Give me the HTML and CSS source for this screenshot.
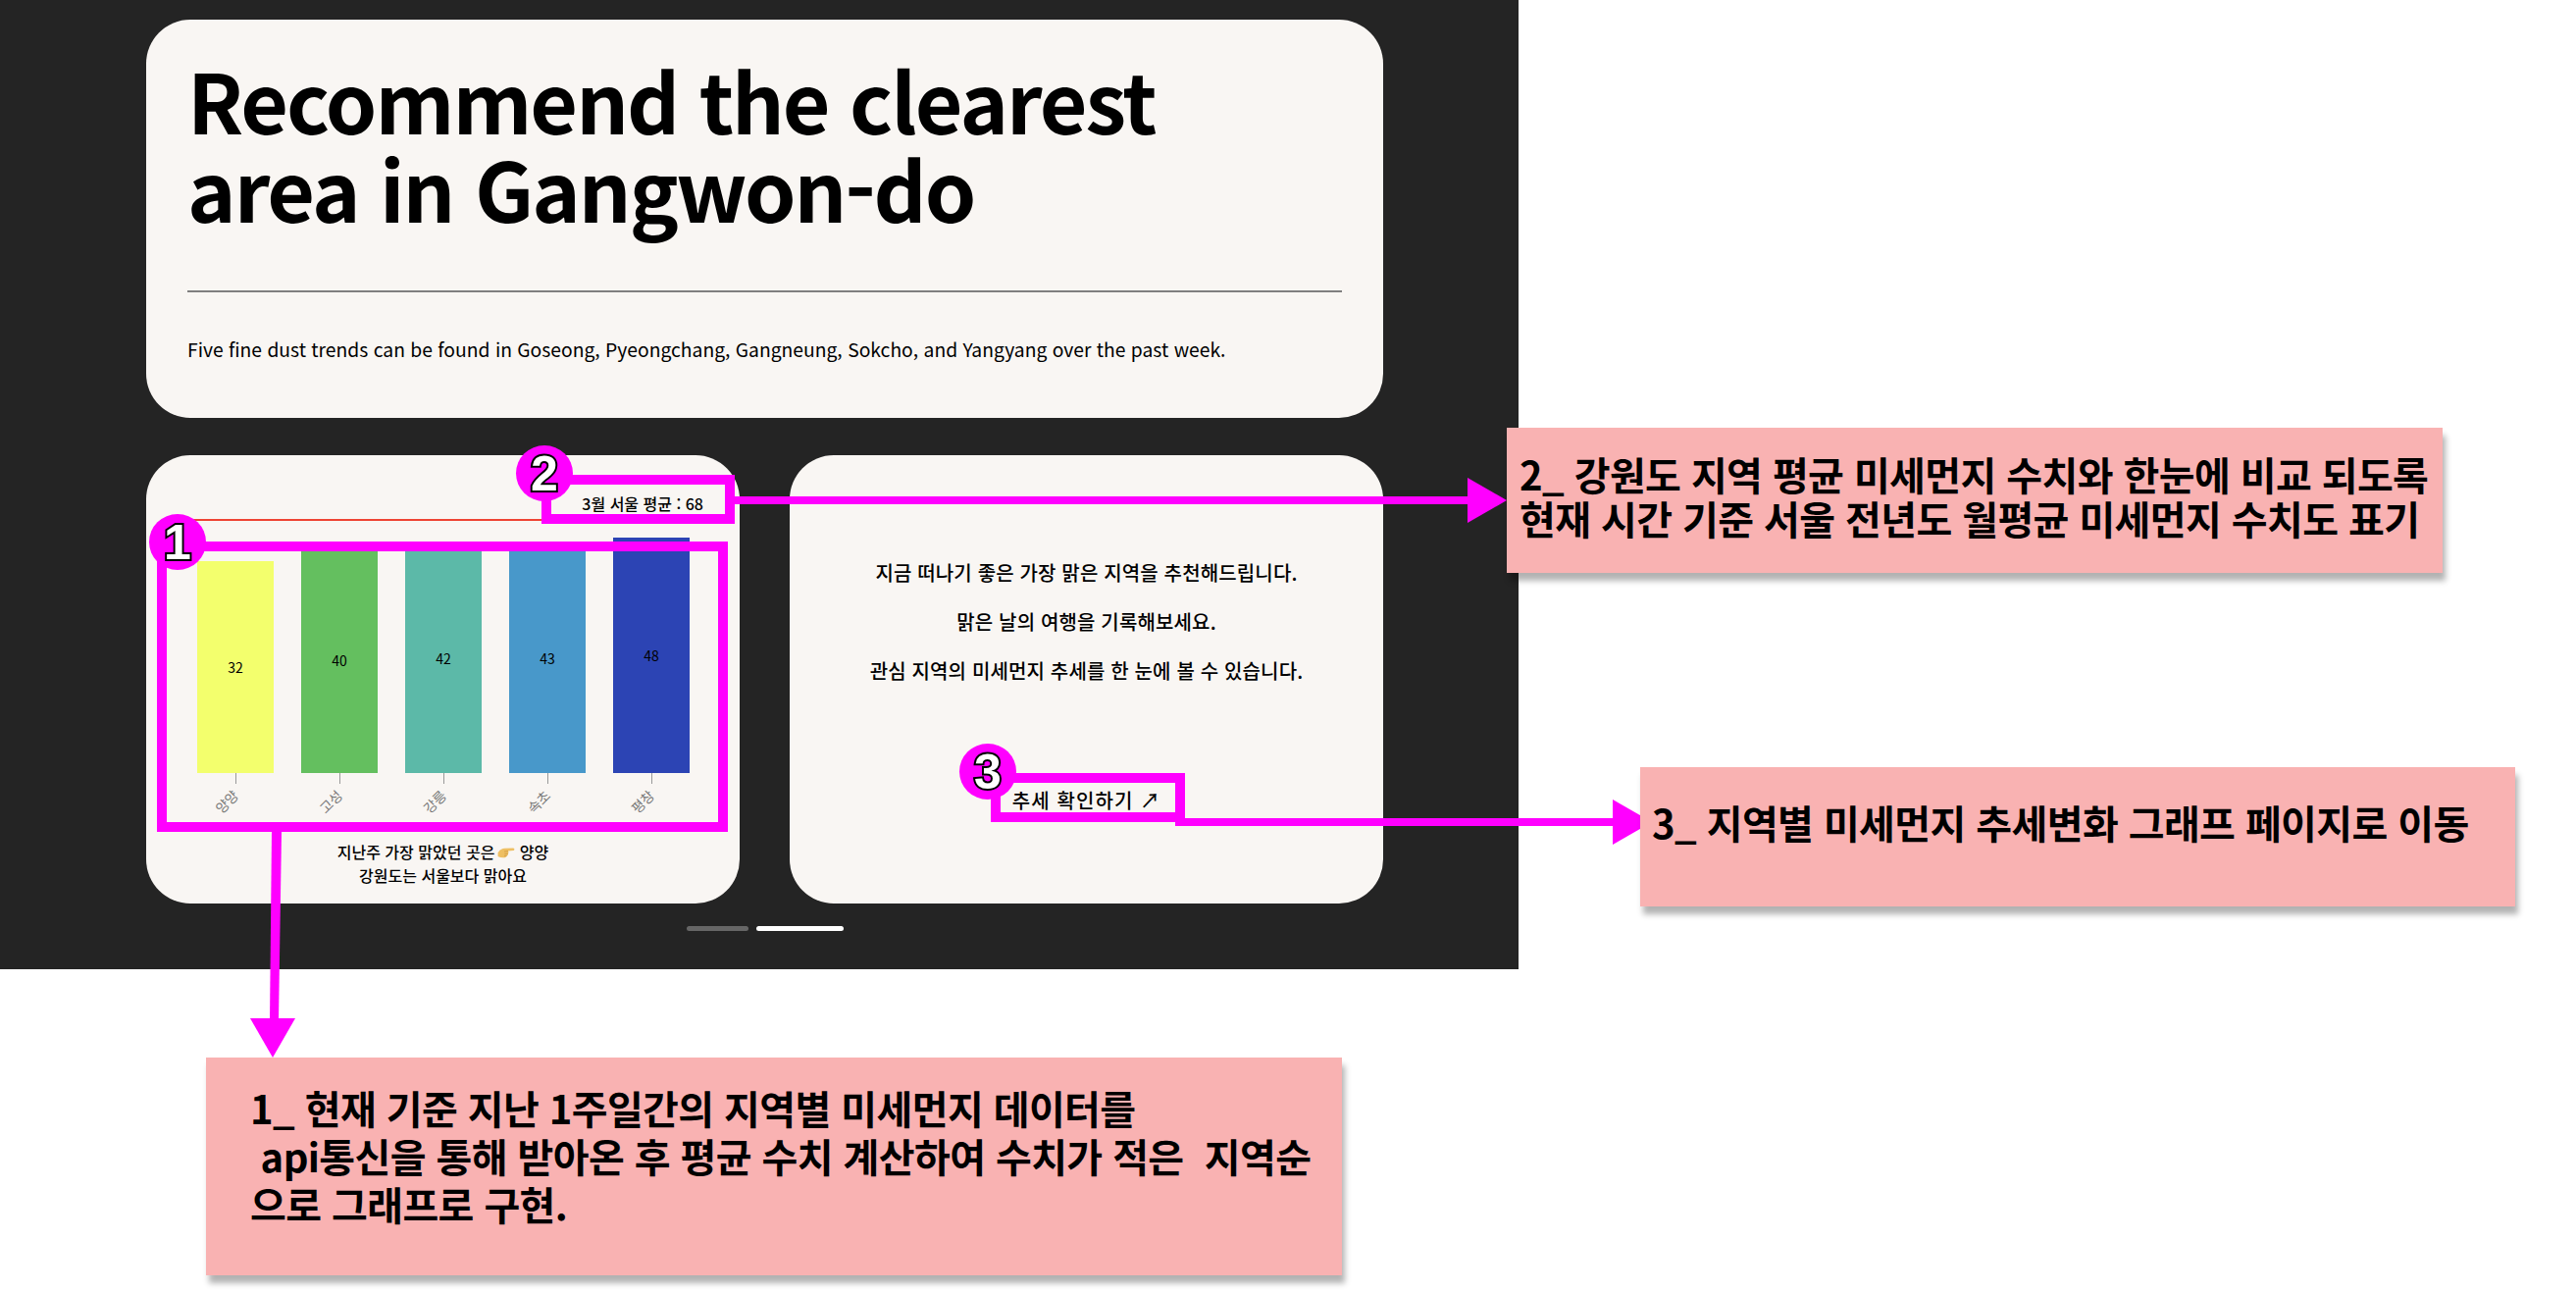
FILE: index.html
```html
<!DOCTYPE html>
<html lang="ko">
<head>
<meta charset="UTF-8">
<meta name="viewport" content="width=device-width, initial-scale=1.0">
<title>Recommend the clearest area</title>
<link rel="stylesheet" href="styles.css">
</head>
<body>

    <main class="panel">
        <section class="card intro">
            <h1>Recommend the clearest<br>area in Gangwon-do</h1>
            <hr>
            <p>Five fine dust trends can be found in Goseong, Pyeongchang, Gangneung, Sokcho, and Yangyang over the past week.</p>
        </section>

        <div class="card-row">
            <section class="card chart-card">
                <div class="average">3월 서울 평균 : 68</div>
                <div class="chart">
                    <div class="col">
                        <div class="bar bar-yangyang" style="height: 216px">32</div>
                        <span class="tick"></span>
                        <span class="region">양양</span>
                    </div>
                    <div class="col">
                        <div class="bar bar-goseong" style="height: 230px">40</div>
                        <span class="tick"></span>
                        <span class="region">고성</span>
                    </div>
                    <div class="col">
                        <div class="bar bar-gangneung" style="height: 234px">42</div>
                        <span class="tick"></span>
                        <span class="region">강릉</span>
                    </div>
                    <div class="col">
                        <div class="bar bar-sokcho" style="height: 235px">43</div>
                        <span class="tick"></span>
                        <span class="region">속초</span>
                    </div>
                    <div class="col">
                        <div class="bar bar-pyeongchang" style="height: 240px">48</div>
                        <span class="tick"></span>
                        <span class="region">평창</span>
                    </div>
                </div>
                <p class="caption">지난주 가장 맑았던 곳은<svg class="hand" viewBox="0 0 18 14" aria-hidden="true">
                        <path d="M0.6 7 C2.6 4.2 5 2.8 7.4 2.8 L16.2 2.4 C17.8 2.5 17.8 4.9 16.2 5 L11 5.6 C11.6 6.6 11.5 7.6 10.9 8.2 C11.1 9.2 10.6 10.1 9.6 10.4 C9.2 11.6 8.2 12.2 6.8 12.2 C4.4 12.4 2.4 11.8 0.6 11 Z" fill="#eebf63"/>
                        <path d="M7 6 L11 5.6 M7.4 8.3 L10.9 8.2 M7 10.4 L9.6 10.4" stroke="#c9923c" stroke-width=".7" fill="none"/>
                    </svg> 양양<br>강원도는 서울보다 맑아요</p>
            </section>

            <section class="card info-card">
                <p>지금 떠나기 좋은 가장 맑은 지역을 추천해드립니다.</p>
                <p>맑은 날의 여행을 기록해보세요.</p>
                <p>관심 지역의 미세먼지 추세를 한 눈에 볼 수 있습니다.</p>
                <a href="#" class="trend-link">추세 확인하기 ↗</a>
            </section>
        </div>

        <div class="pager">
            <span class="pill"></span>
            <span class="pill active"></span>
        </div>
    </main>

    <!-- annotations drawn on top of the screenshot -->
    <svg class="marks" width="2626" height="1316" viewBox="0 0 2626 1316" aria-hidden="true">
        <rect x="165" y="557" width="572" height="286"/>
        <rect x="557" y="489" width="187" height="40"/>
        <rect x="1015" y="793" width="188" height="40"/>
        <polygon points="277,848 287,848 284,1040 275,1040"/>
        <polygon points="255,1038 301,1038 278,1078"/>
        <rect class="line" x="749" y="506" width="750" height="8"/>
        <polygon points="1496,487 1536,510 1496,533"/>
        <rect class="line" x="1198" y="834" width="450" height="8"/>
        <polygon points="1644,815 1684,838 1644,861"/>
    </svg>

    <div class="marker marker-1">1</div>
    <div class="marker marker-2">2</div>
    <div class="marker marker-3">3</div>

    <div class="note note-1">1_ 현재 기준 지난 1주일간의 지역별 미세먼지 데이터를<br> api통신을 통해 받아온 후 평균 수치 계산하여 수치가 적은  지역순<br>으로 그래프로 구현.</div>
    <div class="note note-2">2_ 강원도 지역 평균 미세먼지 수치와 한눈에 비교 되도록<br>현재 시간 기준 서울 전년도 월평균 미세먼지 수치도 표기</div>
    <div class="note note-3">3_ 지역별 미세먼지 추세변화 그래프 페이지로 이동</div>

</body>
</html>
```

FILE: styles.css
```css
* {
    box-sizing: border-box;
}
html, body {
    height: 100%;
}
body {
    margin: 0;
    position: relative;
    width: 2626px;
    height: 1316px;
    overflow: hidden;
    background: #fff;
    color: #000;
    font-family: "Noto Sans CJK KR", "Noto Sans", sans-serif;
}
h1, p {
    margin: 0;
}
a {
    color: inherit;
    text-decoration: none;
}

/* dark app panel */
.panel {
    width: 1548px;
    height: 988px;
    padding: 20px 138px 0 149px;
    background: #242424;
}
.card {
    background: #f9f6f3;
    border-radius: 45px;
}
.intro {
    height: 406px;
    padding: 36px 42px 0 42px;
}
.intro h1 {
    font-size: 84px;
    line-height: 90px;
    font-weight: 700;
    letter-spacing: -2px;
}
.intro hr {
    margin: 60px 0 0 0;
    border: 0;
    height: 2px;
    background: #807f7f;
}
.intro p {
    margin-top: 44px;
    font-size: 19.3px;
    line-height: 28px;
}

.card-row {
    display: flex;
    gap: 51px;
    margin-top: 38px;
}
.card-row .card {
    width: 605px;
    height: 457px;
}

/* chart card */
.chart-card {
    padding-top: 36px;
}
.average {
    height: 31px;
    margin-left: 20px;
    margin-right: 9px;
    padding-right: 28px;
    text-align: right;
    font-size: 16px;
    font-weight: 500;
    line-height: 26px;
    border-bottom: 2px solid #ee4433;
}
.chart {
    display: flex;
    gap: 28px;
    align-items: flex-end;
    height: 317px;
    padding-left: 52px;
}
.col {
    display: flex;
    flex-direction: column;
    align-items: center;
    width: 78px;
}
.bar {
    width: 100%;
    display: flex;
    justify-content: center;
    align-items: center;
    font-size: 14px;
}
.bar-yangyang { background: #f3ff6d; }
.bar-goseong { background: #64bf5f; }
.bar-gangneung { background: #5cb9a8; }
.bar-sokcho { background: #4898ca; }
.bar-pyeongchang { background: #2c44b4; }
.tick {
    width: 1px;
    height: 11px;
    background: #999;
}
.region {
    height: 49px;
    padding-top: 8px;
    font-size: 14px;
    line-height: 20px;
    color: #777;
    transform: translate(-9px, 0) rotate(-45deg);
    transform-origin: center 18px;
}
.caption {
    margin-top: 8px;
    text-align: center;
    font-size: 16px;
    font-weight: 500;
    line-height: 24px;
}
.hand {
    width: 18px;
    height: 14px;
    margin-left: 3px;
    vertical-align: -1px;
}

/* text card */
.info-card {
    display: flex;
    flex-direction: column;
    align-items: center;
    padding-top: 105px;
}
.info-card p {
    font-size: 20px;
    font-weight: 500;
    letter-spacing: .15px;
    line-height: 30px;
    margin-bottom: 20px;
}
.trend-link {
    margin-top: 84px;
    font-size: 20px;
    font-weight: 500;
    letter-spacing: 1.1px;
    line-height: 26px;
}

.pager {
    display: flex;
    gap: 8px;
    margin-top: 23px;
    padding-left: 551px;
}
.pill {
    width: 63px;
    height: 5px;
    border-radius: 3px;
    background: #666;
}
.pill.active {
    width: 89px;
    background: #fff;
}

/* annotation layer */
.marks {
    position: absolute;
    top: 0;
    left: 0;
}
.marks rect {
    fill: none;
    stroke: #ff00ff;
    stroke-width: 10;
}
.marks rect.line {
    fill: #ff00ff;
    stroke: none;
}
.marks polygon {
    fill: #ff00ff;
}
.marker {
    position: absolute;
    width: 58px;
    height: 57px;
    border-radius: 50%;
    background: #ff00ff;
    display: flex;
    justify-content: center;
    align-items: center;
    font-family: "Liberation Sans", sans-serif;
    font-size: 50px;
    font-weight: 700;
    color: #fff;
    -webkit-text-stroke: 4px #000;
    paint-order: stroke fill;
}
.marker-1 { left: 152px; top: 524px; }
.marker-2 { left: 526px; top: 454px; }
.marker-3 { left: 978px; top: 758px; }

.note {
    position: absolute;
    background: #f9b2b2;
    box-shadow: 3px 8px 6px rgba(0, 0, 0, .3);
    font-size: 40px;
    font-weight: 700;
    letter-spacing: -.6px;
    white-space: pre;
}
.note-1 {
    left: 210px;
    top: 1078px;
    width: 1158px;
    height: 222px;
    padding: 27px 0 0 45px;
    line-height: 49px;
}
.note-2 {
    left: 1536px;
    top: 436px;
    width: 954px;
    height: 148px;
    padding: 25px 0 0 13px;
    line-height: 45px;
}
.note-3 {
    left: 1672px;
    top: 782px;
    width: 892px;
    height: 142px;
    padding: 34px 0 0 12px;
    line-height: 45px;
}
```
